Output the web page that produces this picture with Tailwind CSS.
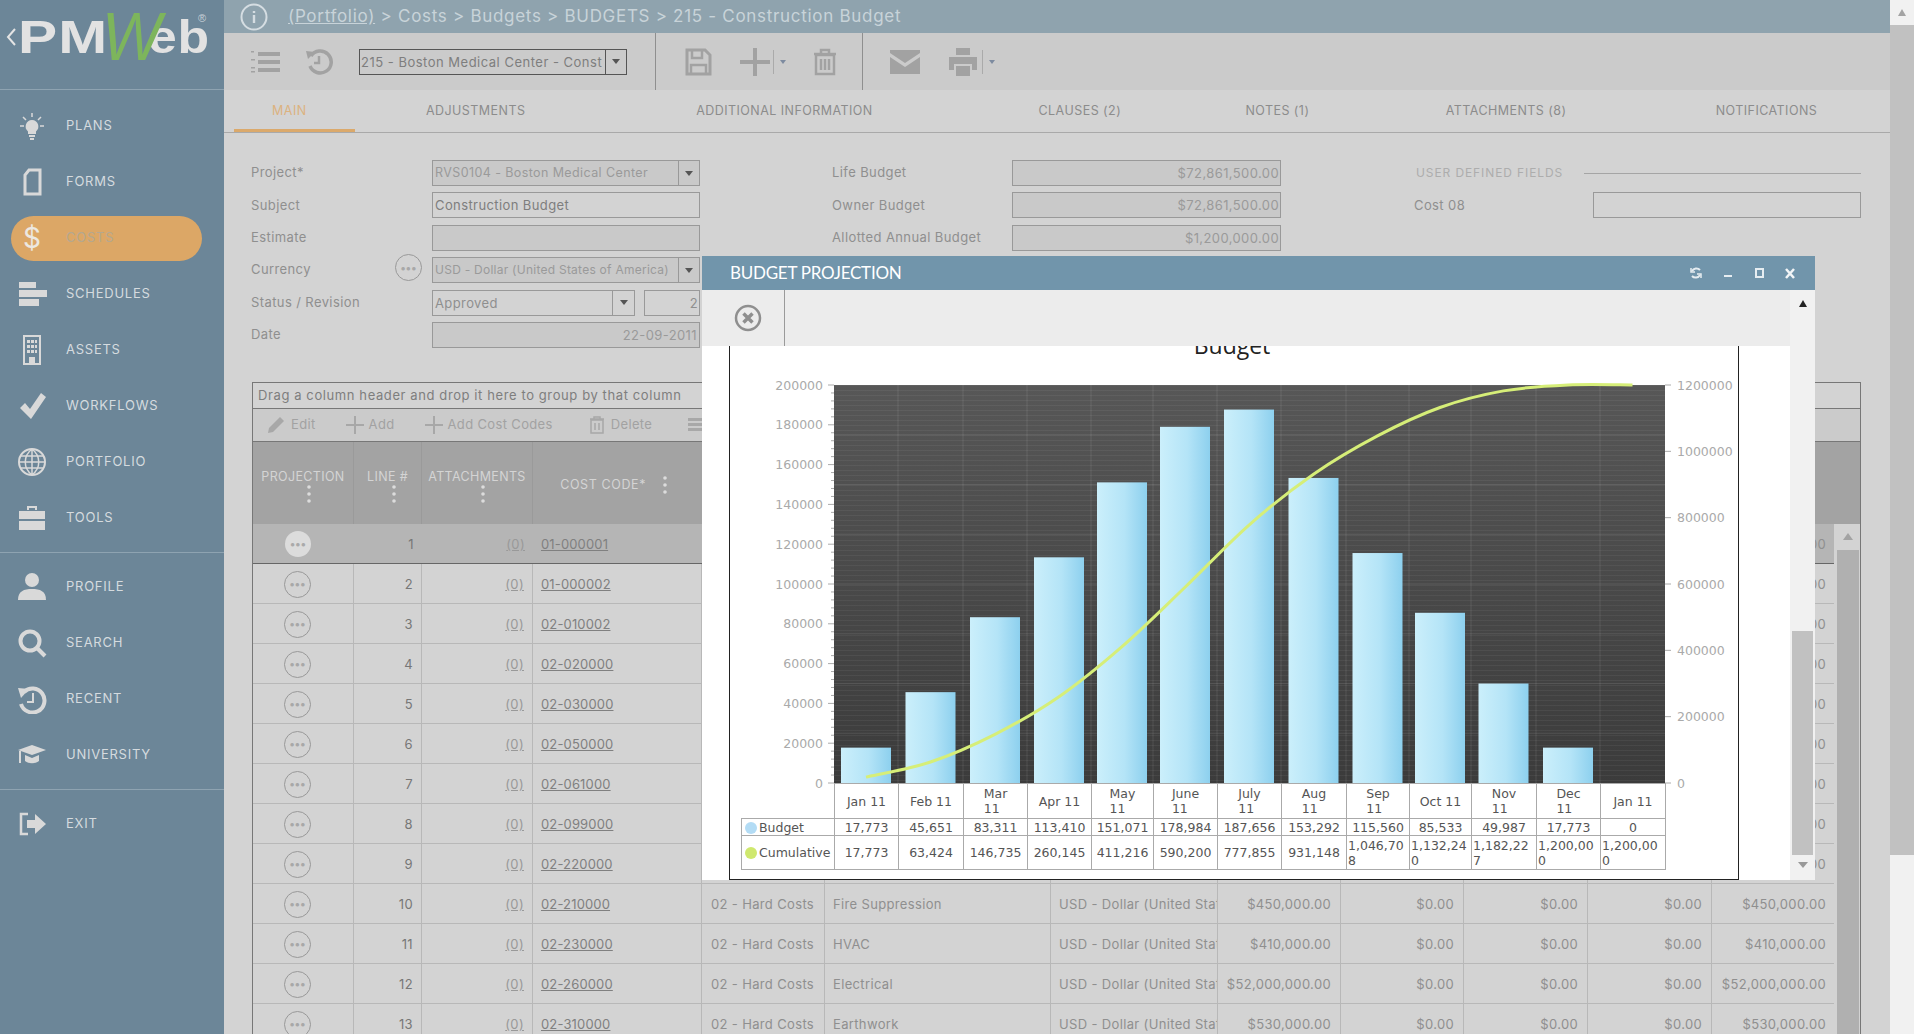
<!DOCTYPE html>
<html lang="en">
<head>
  <meta charset="UTF-8" />
  <title>PMWeb - Budgets</title>
  <script src="https://cdn.jsdelivr.net/npm/@tailwindcss/browser@4"></script>
</head>
<body class="h-screen overflow-hidden bg-[#d3d3d3] font-['Inter',sans-serif] text-[13px] text-[#8f8f8f]">
  <div class="flex h-[1034px] w-[1914px]">

    <!-- Sidebar -->
    <aside class="w-[224px] shrink-0 bg-[#6c8698] text-[13px] tracking-[0.75px] text-[#d5dbdf]">
      <div class="h-[90px] border-b border-[#8ea3b1]">
        <svg width="224" height="89" viewBox="0 0 224 89">
          <path d="M15 29l-7 8 7 8" fill="none" stroke="#e4e4e4" stroke-width="2" />
          <text x="18" y="53" font-family="Liberation Sans" font-weight="700" font-size="46" fill="#e2e2e2" textLength="90" lengthAdjust="spacingAndGlyphs">PM</text>
          <text x="148" y="53" font-family="Liberation Sans" font-weight="700" font-size="46" fill="#e2e2e2" textLength="62" lengthAdjust="spacingAndGlyphs">eb</text>
          <text x="102" y="60" font-family="Liberation Sans" font-style="italic" font-size="68" fill="#7db55c" textLength="60" lengthAdjust="spacingAndGlyphs">W</text>
          <text x="198" y="22" font-family="Liberation Sans" font-size="11" fill="#c9d2d8">®</text>
        </svg>
      </div>
      <nav id="sideNav" class="pt-[8px]"></nav>
    </aside>

    <!-- Main -->
    <main class="relative w-[1666px] shrink-0 overflow-hidden">
      <header class="flex h-[33px] items-center bg-[#8fa3ae] text-[17px] tracking-[0.7px] text-[#c8d3d9]">
        <svg class="ml-[15px] mr-[19px]" width="30" height="30" viewBox="0 0 30 30" fill="none" stroke="#d5dde2">
          <circle cx="15" cy="15" r="12.5" stroke-width="2" />
          <path d="M15 13v8M15 9v2" stroke-width="2.4" />
        </svg>
        <span><u>(Portfolio)</u> &gt; Costs &gt; Budgets &gt; BUDGETS &gt; 215 - Construction Budget</span>
      </header>

      <!-- Toolbar -->
      <div class="flex h-[57px] items-center bg-[#cbcbcb]">
        <svg class="ml-[26px]" width="30" height="30" viewBox="0 0 30 30" fill="#a2a2a2">
          <path d="M8 5h22v4H8zM8 13h22v4H8zM8 21h22v4H8zM1 4h3v1.500H1zM1 12h4v1.500H1zM1 20h4v1.500H1zM1 24h4v1.500H1z" />
        </svg>
        <svg class="ml-[25px]" width="28" height="30" viewBox="0 0 28 30" fill="none" stroke="#a2a2a2" stroke-width="3.500">
          <path d="M6 9a11 11 0 1 1-1 10" />
          <path d="M1 4l9 1-7 7z" fill="#a2a2a2" stroke="none" />
          <path d="M14 9v7h-5" stroke-width="2.500" />
        </svg>
        <div class="ml-[26px] flex h-[26px] w-[268px] border border-[#555] text-[#7e7e7e]">
          <span class="flex-1 overflow-hidden whitespace-nowrap pl-[1px] leading-[24px] tracking-[0.5px]">215 - Boston Medical Center - Const</span>
          <span class="flex w-[21px] shrink-0 items-center justify-center border-l border-[#555]"><span class="border-x-[4px] border-t-[5px] border-x-transparent border-t-[#555]"></span></span>
        </div>
        <div class="ml-[28px] h-full w-px bg-[#8f8f8f]"></div>
        <svg class="ml-[29px]" width="27" height="28" viewBox="0 0 27 28" fill="none" stroke="#a2a2a2" stroke-width="3">
          <path d="M2 2h18l5 5v19H2z" /><path d="M7 3v7h10V3M6 26v-9h15v9" stroke-width="2.500" />
        </svg>
        <svg class="ml-[28px]" width="30" height="30" viewBox="0 0 30 30" fill="#a2a2a2"><path d="M13 1h4v12h13v4H17v12h-4V17H0v-4h13z" /></svg>
        <span class="ml-[3px] h-[24px] w-px bg-[#aaa]"></span>
        <span class="ml-[6px] border-x-[3px] border-t-[4px] border-x-transparent border-t-[#7d8ba0]"></span>
        <svg class="ml-[27px]" width="24" height="28" viewBox="0 0 24 28" fill="none" stroke="#a2a2a2" stroke-width="2.500">
          <path d="M3 7h18v19H3zM1 6h22M8 6V2h8v4M8 11v11M12 11v11M16 11v11" />
        </svg>
        <div class="ml-[25px] h-full w-px bg-[#8f8f8f]"></div>
        <svg class="ml-[27px]" width="30" height="24" viewBox="0 0 30 24" fill="#a2a2a2"><path d="M0 0h30v3L15 13 0 3zM0 7l15 10L30 7v17H0z" /></svg>
        <svg class="ml-[28px]" width="30" height="30" viewBox="0 0 30 30" fill="#a2a2a2"><path d="M8 1h14v7H8zM1 10h28v13h-5v-6H6v6H1zM8 19h14v10H8z" /></svg>
        <span class="ml-[4px] h-[24px] w-px bg-[#aaa]"></span>
        <span class="ml-[6px] border-x-[3px] border-t-[4px] border-x-transparent border-t-[#7d8ba0]"></span>
      </div>

      <!-- Tabs -->
      <div class="relative h-[43px] border-b border-[#a9a9a9] bg-[#d3d3d3] text-[12.5px] tracking-[0.45px] text-[#8c8c8c]">
        <div class="flex h-[42px] items-center">
          <span class="ml-[10px] flex h-[42px] w-[122px] items-center justify-center border-b-[3px] border-[#dba96b] pt-[3px] pr-[10px] text-[#dcb27f]">MAIN</span>
          <span class="w-[245px] text-center">ADJUSTMENTS</span>
          <span class="w-[380px] text-center">ADDITIONAL INFORMATION</span>
          <span class="ml-[3px] w-[212px] text-center">CLAUSES (2)</span>
          <span class="ml-[1px] w-[186px] text-center">NOTES (1)</span>
          <span class="ml-[2px] w-[273px] text-center">ATTACHMENTS (8)</span>
          <span class="ml-[2px] w-[250px] text-center">NOTIFICATIONS</span>
        </div>
      </div>

      <!-- Form -->
      <section class="flex pt-[27px] pl-[27px] tracking-[0.4px]">
        <div class="grid w-[449px] grid-cols-[181px_268px] auto-rows-[26px] items-center gap-y-[6.4px]">
          <label>Project*</label>
          <div class="flex h-[26px] border border-[#999] bg-[#c9c9c9] text-[12.5px]"><span class="flex-1 overflow-hidden whitespace-nowrap pl-[2px] leading-[24px] text-[#9a9a9a]">RVS0104 - Boston Medical Center</span><span class="flex w-[21px] items-center justify-center border-l border-[#999]"><span class="border-x-[4px] border-t-[5px] border-x-transparent border-t-[#555]"></span></span></div>
          <label>Subject</label>
          <div class="h-[26px] border border-[#999] pl-[2px] leading-[24px] text-[#7e7e7e]">Construction Budget</div>
          <label>Estimate</label>
          <div class="h-[26px] border border-[#999] bg-[#c9c9c9]"></div>
          <label class="relative">Currency
            <span class="absolute left-[144px] top-[-6px] flex h-[27px] w-[27px] items-center justify-center rounded-full border border-[#999] text-[11px] font-bold tracking-[0.2px] text-[#a8a8a8]">•••</span>
          </label>
          <div class="flex h-[26px] border border-[#999] bg-[#c9c9c9] text-[12px] tracking-[0.25px]"><span class="flex-1 overflow-hidden whitespace-nowrap pl-[2px] leading-[24px] text-[#9a9a9a]">USD - Dollar (United States of America)</span><span class="flex w-[21px] items-center justify-center border-l border-[#999]"><span class="border-x-[4px] border-t-[5px] border-x-transparent border-t-[#555]"></span></span></div>
          <label>Status / Revision</label>
          <div class="flex gap-[9px]">
            <div class="flex h-[26px] w-[203px] border border-[#999]"><span class="flex-1 pl-[2px] leading-[24px] text-[#8f8f8f]">Approved</span><span class="flex w-[22px] items-center justify-center border-l border-[#999]"><span class="border-x-[4px] border-t-[5px] border-x-transparent border-t-[#555]"></span></span></div>
            <div class="h-[26px] w-[56px] border border-[#999] pr-[1px] text-right leading-[24px] text-[#8f8f8f]">2</div>
          </div>
          <label>Date</label>
          <div class="h-[26px] border border-[#999] bg-[#c9c9c9] pr-[2px] text-right leading-[24px] text-[#9a9a9a]">22-09-2011</div>
        </div>

        <div class="ml-[132px] grid w-[449px] grid-cols-[180px_269px] auto-rows-[26px] items-center gap-y-[6.4px]">
          <label>Life Budget</label>
          <div class="h-[26px] border border-[#999] bg-[#c9c9c9] pr-[1px] text-right leading-[24px] text-[#9a9a9a]">$72,861,500.00</div>
          <label>Owner Budget</label>
          <div class="h-[26px] border border-[#999] bg-[#c9c9c9] pr-[1px] text-right leading-[24px] text-[#9a9a9a]">$72,861,500.00</div>
          <label>Allotted Annual Budget</label>
          <div class="h-[26px] border border-[#999] bg-[#c9c9c9] pr-[1px] text-right leading-[24px] text-[#9a9a9a]">$1,200,000.00</div>
        </div>

        <div class="ml-[133px] grid w-[447px] grid-cols-[179px_268px] auto-rows-[26px] items-center gap-y-[6.4px]">
          <div class="col-span-2 flex items-center text-[12px] tracking-[0.9px] text-[#adadad]"><span class="ml-[2px] whitespace-nowrap">USER DEFINED FIELDS</span><span class="ml-[21px] h-px flex-1 bg-[#a5a5a5]"></span></div>
          <label>Cost 08</label>
          <div class="h-[26px] border border-[#999]"></div>
        </div>
      </section>

      <!-- Grid -->
      <section class="mt-[34px] ml-[28px] w-[1609px] tracking-[0.35px]">
        <div class="flex h-[27px] items-center border border-[#777] pl-[5px] tracking-[0.6px] text-[#7e7e7e]">Drag a column header and drop it here to group by that column</div>
        <div class="flex h-[33px] items-center border-x border-b border-[#777] bg-[#cbcbcb] text-[#a2a2a2]">
          <svg class="ml-[14px]" width="18" height="18" viewBox="0 0 18 18" fill="#a8a8a8"><path d="M13 1l4 4L6 16l-5 1 1-5z" /></svg>
          <span class="ml-[6px]">Edit</span>
          <svg class="ml-[30px]" width="18" height="18" viewBox="0 0 18 18" fill="#a8a8a8"><path d="M8 0h2v8h8v2h-8v8H8v-8H0V8h8z" /></svg>
          <span class="ml-[5px]">Add</span>
          <svg class="ml-[30px]" width="18" height="18" viewBox="0 0 18 18" fill="#a8a8a8"><path d="M8 0h2v8h8v2h-8v8H8v-8H0V8h8z" /></svg>
          <span class="ml-[5px]">Add Cost Codes</span>
          <svg class="ml-[36px]" width="16" height="18" viewBox="0 0 16 18" fill="none" stroke="#a8a8a8" stroke-width="1.500"><path d="M2 4h12v13H2zM1 3h14M5 3V1h6v2M6 7v7M10 7v7" /></svg>
          <span class="ml-[6px]">Delete</span>
          <svg class="ml-[36px]" width="16" height="16" viewBox="0 0 16 16" fill="#a8a8a8"><path d="M0 1h14v3H0zM0 6h16v3H0zM0 11h14v3H0z" /></svg>
        </div>

        <div class="relative w-[1609px] border-x border-[#777]">
          <!-- column headers -->
          <div class="grid h-[82px] grid-cols-[101px_68px_111px_169px_123px_226px_167px_123px_123px_124px_124px_150px] bg-[#a3a3a3] text-[12.5px] text-[#d4d4d4]">
            <div class="flex flex-col items-center justify-center border-r border-[#9a9a9a] pt-[5px]">PROJECTION<svg class="ml-[12px] mt-[-2px]" width="4" height="18" viewBox="0 0 4 18" fill="#dcdcdc"><circle cx="2" cy="2" r="1.800" /><circle cx="2" cy="9" r="1.800" /><circle cx="2" cy="16" r="1.800" /></svg></div>
            <div class="flex flex-col items-center justify-center border-r border-[#9a9a9a] pt-[5px]">LINE #<svg class="ml-[12px] mt-[-2px]" width="4" height="18" viewBox="0 0 4 18" fill="#dcdcdc"><circle cx="2" cy="2" r="1.800" /><circle cx="2" cy="9" r="1.800" /><circle cx="2" cy="16" r="1.800" /></svg></div>
            <div class="flex flex-col items-center justify-center border-r border-[#9a9a9a] pt-[5px]">ATTACHMENTS<svg class="ml-[12px] mt-[-2px]" width="4" height="18" viewBox="0 0 4 18" fill="#dcdcdc"><circle cx="2" cy="2" r="1.800" /><circle cx="2" cy="9" r="1.800" /><circle cx="2" cy="16" r="1.800" /></svg></div>
            <div class="flex items-center justify-end gap-[17px] pr-[35px] pt-[5px] tracking-[0.6px]">COST CODE*<svg width="4" height="18" viewBox="0 0 4 18" fill="#dcdcdc"><circle cx="2" cy="2" r="1.800" /><circle cx="2" cy="9" r="1.800" /><circle cx="2" cy="16" r="1.800" /></svg></div>
          </div>
          <div id="gridRows" class="h-[510px] overflow-hidden"></div>
          <!-- grid scrollbar -->
          <div class="absolute right-0 top-[83px] flex h-[510px] w-[24px] flex-col items-center bg-[#d3d3d3]">
            <span class="mt-[8px] border-x-[5px] border-b-[7px] border-x-transparent border-b-[#a3a3a3]"></span>
            <div class="mt-[10px] h-full w-[22px] bg-[#b0b0b0]"></div>
          </div>
        </div>
      </section>

      <!-- Budget projection window -->
      <div class="absolute left-[478px] top-[256px] flex h-[624px] w-[1113px] flex-col bg-white">
        <div class="flex h-[34px] shrink-0 items-center bg-[#7195ab] pl-[28px] font-['Lato',sans-serif] text-[17px] tracking-[-0.25px] text-white">
          <span class="flex-1">BUDGET PROJECTION</span>
          <svg class="mr-[21px]" width="14" height="14" viewBox="0 0 14 14" fill="none" stroke="#e6edf1" stroke-width="2"><path d="M11 4a5 5 0 0 0-8 1M3 10a5 5 0 0 0 8-1" /><path d="M2 2v4h4M12 12V8H8" stroke-width="1.500" /></svg>
          <span class="mr-[23px] mt-[6px] h-[2px] w-[8px] bg-[#e6edf1]"></span>
          <span class="mr-[21px] h-[10px] w-[9px] border-2 border-[#e6edf1]"></span>
          <svg class="mr-[20px]" width="10" height="11" viewBox="0 0 10 11" stroke="#f2f5f7" stroke-width="2.500"><path d="M1 1l8 9M9 1l-8 9" /></svg>
        </div>
        <div class="flex min-h-0 flex-1">
          <div class="flex min-w-0 flex-1 flex-col">
            <div class="flex h-[56px] shrink-0 bg-[#ececec]">
              <div class="flex w-[83px] items-center justify-center border-r border-[#9a9a9a] pl-[10px]">
                <svg width="28" height="28" viewBox="0 0 28 28" fill="none" stroke="#8f8f8f"><circle cx="14" cy="14" r="12" stroke-width="2.500" /><path d="M9.500 9.500l9 9M18.500 9.500l-9 9" stroke-width="3.500" /></svg>
              </div>
            </div>
            <div class="min-h-0 flex-1 pl-[27px]">
              <div class="h-[534px] w-[1010px] overflow-hidden border-x border-b border-[#222]">
                <svg id="chart" class="block" width="1008" height="442" viewBox="730 346 1008 442"></svg>
                <table id="chartTable" class="ml-[11px] mt-[-5px] table-fixed border-collapse font-['DejaVu_Sans',sans-serif] text-[12.5px] leading-[15px] text-[#555]"></table>
              </div>
            </div>
          </div>
          <!-- window scrollbar -->
          <div class="flex w-[25px] shrink-0 flex-col items-center bg-[#f1f1f1]">
            <span class="mt-[10px] border-x-[4px] border-b-[7px] border-x-transparent border-b-[#222]"></span>
            <div class="mt-[324px] h-[224px] w-[21px] bg-[#c1c1c1]"></div>
            <span class="mt-[7px] border-x-[5px] border-t-[6px] border-x-transparent border-t-[#999]"></span>
          </div>
        </div>
      </div>
    </main>

    <!-- Page scrollbar -->
    <div class="flex w-[24px] shrink-0 flex-col items-center bg-[#f1f1f1]">
      <span class="mt-[9px] border-x-[4px] border-b-[7px] border-x-transparent border-b-[#a3a3a3]"></span>
      <div class="mt-[9px] h-[830px] w-full bg-[#c1c1c1]"></div>
    </div>
  </div>

  <script>
    const navIcons = {
      plans: '<path d="M15 9a6.500 6.500 0 0 1 4 11.500V23h-8v-2.500A6.500 6.500 0 0 1 15 9zM12 24h6v2h-6zM13 27h4v2h-4z" fill="currentColor"/><path d="M15 2v4M6 6l3 3M24 6l-3 3M3 15h4M23 15h4" stroke="currentColor" stroke-width="1.500"/>',
      forms: '<path d="M12 3h11v24H8V8z" fill="none" stroke="currentColor" stroke-width="3"/>',
      schedules: '<path d="M2 3h17v6H2zM2 11h28v7H2zM2 20h20v7H2z" fill="currentColor"/>',
      assets: '<path d="M7 1h16v28H7z" fill="none" stroke="currentColor" stroke-width="2"/><path d="M10 5h3v3h-3zM14 5h3v3h-3zM18 5h2v3h-2zM10 10h3v3h-3zM14 10h3v3h-3zM18 10h2v3h-2zM10 15h3v3h-3zM14 15h3v3h-3zM18 15h2v3h-2zM12 22h6v7h-6z" fill="currentColor"/>',
      workflows: '<path d="M3 17l5-5 5 6L24 2l5 4-15 22z" fill="currentColor"/>',
      portfolio: '<circle cx="15" cy="15" r="13" fill="none" stroke="currentColor" stroke-width="2"/><path d="M2 15h26M4 9h22M4 21h22M15 2v26M15 2c-9 7-9 19 0 26M15 2c9 7 9 19 0 26" fill="none" stroke="currentColor" stroke-width="1.500"/>',
      tools: '<path d="M10 7V3h10v4h-2V5h-6v2zM2 8h26v8H2zM2 18h26v9H2z" fill="currentColor"/>',
      profile: '<circle cx="15" cy="8" r="7" fill="currentColor"/><path d="M1 28c0-9 6-11 14-11s14 2 14 11z" fill="currentColor"/>',
      search: '<circle cx="13" cy="13" r="9.500" fill="none" stroke="currentColor" stroke-width="4"/><path d="M20 20l8 8" stroke="currentColor" stroke-width="4"/>',
      recent: '<path d="M7 8a12 12 0 1 1-3 12" fill="none" stroke="currentColor" stroke-width="4"/><path d="M1 4l11 1-8 9z" fill="currentColor"/><path d="M16 9v9h-6" fill="none" stroke="currentColor" stroke-width="2"/>',
      university: '<path d="M1 10l14-5 14 5-14 5z" fill="currentColor"/><path d="M8 15l7 3 7-3v6c-4 3-10 3-14 0z" fill="currentColor"/><path d="M3 11v12" stroke="currentColor" stroke-width="2"/>',
      exit: '<path d="M11 5H4v20h7" fill="none" stroke="currentColor" stroke-width="2.500"/><path d="M10 11h8V5l11 10-11 10v-6h-8z" fill="currentColor"/>'
    };
    const navItems = [
      ["plans", "PLANS"], ["forms", "FORMS"], ["costs", "COSTS"], ["schedules", "SCHEDULES"],
      ["assets", "ASSETS"], ["workflows", "WORKFLOWS"], ["portfolio", "PORTFOLIO"], ["tools", "TOOLS"],
      null,
      ["profile", "PROFILE"], ["search", "SEARCH"], ["recent", "RECENT"], ["university", "UNIVERSITY"],
      null,
      ["exit", "EXIT"]
    ];
    document.getElementById("sideNav").innerHTML = navItems.map((item) => {
      if (!item) return '<div class="my-[6px] h-px bg-[#8ea3b1]"></div>';
      if (item[0] === "costs") {
        return `<div class="flex h-[56px] items-center"><div class="ml-[11px] flex h-[45px] w-[191px] items-center rounded-full bg-[#dca766]"><span class="ml-[12px] w-[43px] text-[28px] leading-none text-[#ece8e0]">$</span><span class="text-[#b5a88f]">COSTS</span></div></div>`;
      }
      return `<div class="flex h-[56px] items-center"><svg class="ml-[17px] mr-[19px] text-[#d9d9d9]" width="30" height="30" viewBox="0 0 30 30">${navIcons[item[0]]}</svg><span>${item[1]}</span></div>`;
    }).join("");

    const codes = ["01-000001", "01-000002", "02-010002", "02-020000", "02-030000", "02-050000", "02-061000", "02-099000", "02-220000", "02-210000", "02-230000", "02-260000", "02-310000"];
    const details = {
      10: ["Fire Suppression", "$450,000.00"],
      11: ["HVAC", "$410,000.00"],
      12: ["Electrical", "$52,000,000.00"],
      13: ["Earthwork", "$530,000.00"]
    };
    document.getElementById("gridRows").innerHTML = codes.map((code, i) => {
      const line = i + 1;
      const [desc, amount] = details[line] || ["", "$0.00"];
      const selected = line === 1;
      const cell = selected ? "border-[#a3a3a3]" : "border-r border-[#b8b8b8]";
      const dots = selected
        ? '<span class="flex h-[26px] w-[26px] items-center justify-center rounded-full bg-[#dcdcdc] text-[11px] font-bold tracking-[0.2px] text-[#aaa]">•••</span>'
        : '<span class="flex h-[27px] w-[27px] items-center justify-center rounded-full border border-[#999] text-[11px] font-bold tracking-[0.2px] text-[#a8a8a8]">•••</span>';
      return `<div class="grid h-[40px] w-[1581px] grid-cols-[101px_68px_111px_169px_123px_226px_167px_123px_123px_124px_124px_122px] items-stretch ${selected ? "border-b border-[#666] bg-[#b5b5b5]" : "border-b border-[#b8b8b8]"} leading-[41px]">
        <div class="flex items-center justify-center pr-[11px] ${cell}">${dots}</div>
        <div class="${cell} pr-[8px] text-right text-[#777]">${line}</div>
        <div class="${cell} pr-[8px] text-right text-[#999]"><u>(0)</u></div>
        <div class="${cell} pl-[8px] tracking-[0.15px] text-[#808080]"><u>${code}</u></div>
        <div class="${cell} whitespace-nowrap pl-[9px]">02 - Hard Costs</div>
        <div class="${cell} whitespace-nowrap pl-[8px]">${desc}</div>
        <div class="${cell} overflow-hidden whitespace-nowrap pl-[8px]">USD - Dollar (United States of America)</div>
        <div class="${cell} pr-[9px] text-right">${amount}</div>
        <div class="${cell} pr-[9px] text-right">$0.00</div>
        <div class="${cell} pr-[9px] text-right">$0.00</div>
        <div class="${cell} pr-[9px] text-right">$0.00</div>
        <div class="pr-[8px] text-right">${amount}</div>
      </div>`;
    }).join("");

    // Chart data
    const months = [["Jan 11"], ["Feb 11"], ["Mar", "11"], ["Apr 11"], ["May", "11"], ["June", "11"], ["July", "11"], ["Aug", "11"], ["Sep", "11"], ["Oct 11"], ["Nov", "11"], ["Dec", "11"], ["Jan 11"]];
    const budget = [17773, 45651, 83311, 113410, 151071, 178984, 187656, 153292, 115560, 85533, 49987, 17773, 0];
    const cumulative = [17773, 63424, 146735, 260145, 411216, 590200, 777855, 931148, 1046708, 1132240, 1182227, 1200000, 1200000];
    const edges = [834, 898, 963, 1027, 1091, 1153, 1217, 1281, 1346, 1409, 1471, 1536, 1600, 1665];
    const plotTop = 385, plotBottom = 783, plotH = plotBottom - plotTop;

    const centers = edges.slice(0, -1).map((e, i) => (e + edges[i + 1]) / 2);
    const pts = cumulative.map((v, i) => [centers[i], plotBottom - v / 1200000 * plotH]);
    let path = `M${pts[0][0]} ${pts[0][1]}`;
    for (let i = 0; i < pts.length - 1; i++) {
      const p0 = pts[Math.max(i - 1, 0)], p1 = pts[i], p2 = pts[i + 1], p3 = pts[Math.min(i + 2, pts.length - 1)];
      path += `C${p1[0] + (p2[0] - p0[0]) / 6} ${p1[1] + (p2[1] - p0[1]) / 6} ${p2[0] - (p3[0] - p1[0]) / 6} ${p2[1] - (p3[1] - p1[1]) / 6} ${p2[0]} ${p2[1]}`;
    }

    let svg = `<defs>
      <linearGradient id="barFill"><stop offset="0" stop-color="#cbeffb"/><stop offset="0.55" stop-color="#b4e4f7"/><stop offset="1" stop-color="#8dd0ee"/></linearGradient>
      <linearGradient id="plotFill" x1="0" y1="0" x2="0" y2="1"><stop offset="0" stop-color="#575757"/><stop offset="1" stop-color="#3b3b3b"/></linearGradient>
      <pattern id="stripes" width="6" height="5" patternUnits="userSpaceOnUse"><path d="M0 0.500h6" stroke="#fff" stroke-opacity="0.05"/></pattern>
    </defs>
    <text x="1232" y="354" text-anchor="middle" font-family="Open Sans" font-size="23" fill="#222">Budget</text>
    <rect x="834" y="${plotTop}" width="831" height="${plotH}" fill="url(#plotFill)"/>
    <rect x="834" y="${plotTop}" width="831" height="${plotH}" fill="url(#stripes)"/>`;
    edges.slice(1, -1).forEach((x) => { svg += `<path d="M${x} ${plotTop}V${plotBottom}" stroke="#fff" stroke-opacity="0.1"/>`; });
    for (let i = 1; i < 8; i++) {
      const y = plotTop + i * plotH / 8;
      svg += `<path d="M834 ${y}H1665" stroke="#fff" stroke-opacity="0.1"/>`;
    }
    for (let i = 0; i <= 50; i++) {
      const y = plotTop + i * plotH / 50;
      svg += `<path d="M${i % 5 === 0 ? 828 : 831} ${y}H834" stroke="#aaa"/>`;
    }
    const axisText = 'font-family="DejaVu Sans" font-size="12.5" fill="#aaa"';
    for (let i = 0; i <= 10; i++) {
      const y = plotBottom - i * plotH / 10;
      svg += `<text x="823" y="${y + 4.5}" text-anchor="end" ${axisText}>${i * 20000}</text>`;
    }
    for (let i = 0; i <= 6; i++) {
      const y = plotBottom - i * plotH / 6;
      svg += `<path d="M1665 ${y}H1671" stroke="#aaa"/><text x="1677" y="${y + 4.5}" ${axisText}>${i * 200000}</text>`;
    }
    budget.forEach((v, i) => {
      if (!v) return;
      const h = v / 200000 * plotH;
      svg += `<rect x="${centers[i] - 25}" y="${plotBottom - h}" width="50" height="${h}" fill="url(#barFill)"/>`;
    });
    svg += `<path d="${path}" fill="none" stroke="#d6ee78" stroke-width="3"/>`;
    document.getElementById("chart").innerHTML = svg;

    const fmt = (n) => n.toLocaleString("en-US");
    const colWidths = edges.slice(1).map((e, i) => e - edges[i]);
    const border = "border border-[#aaa]";
    document.getElementById("chartTable").innerHTML = `
      <colgroup><col class="w-[93px]">${colWidths.map((w) => `<col style="width:${w}px">`).join("")}</colgroup>
      <tr class="h-[35px]"><td></td>${months.map((m) => `<td class="${border} text-center"><span class="inline-block text-left">${m.join("<br>")}</span></td>`).join("")}</tr>
      <tr class="h-[17px]"><td class="${border} whitespace-nowrap pl-[3px]"><span class="mr-[2px] inline-block h-[12px] w-[12px] rounded-full bg-[#b3dcf5] align-[-2px]"></span>Budget</td>${budget.map((v) => `<td class="${border} text-center">${fmt(v)}</td>`).join("")}</tr>
      <tr class="h-[34px]"><td class="${border} whitespace-nowrap pl-[3px]"><span class="mr-[2px] inline-block h-[12px] w-[12px] rounded-full bg-[#cfe86e] align-[-2px]"></span>Cumulative</td>${cumulative.map((v) => `<td class="${border} text-center">${v >= 1000000 ? `<span class="block break-all px-[1px] text-left">${fmt(v)}</span>` : fmt(v)}</td>`).join("")}</tr>`;
  </script>
</body>
</html>
